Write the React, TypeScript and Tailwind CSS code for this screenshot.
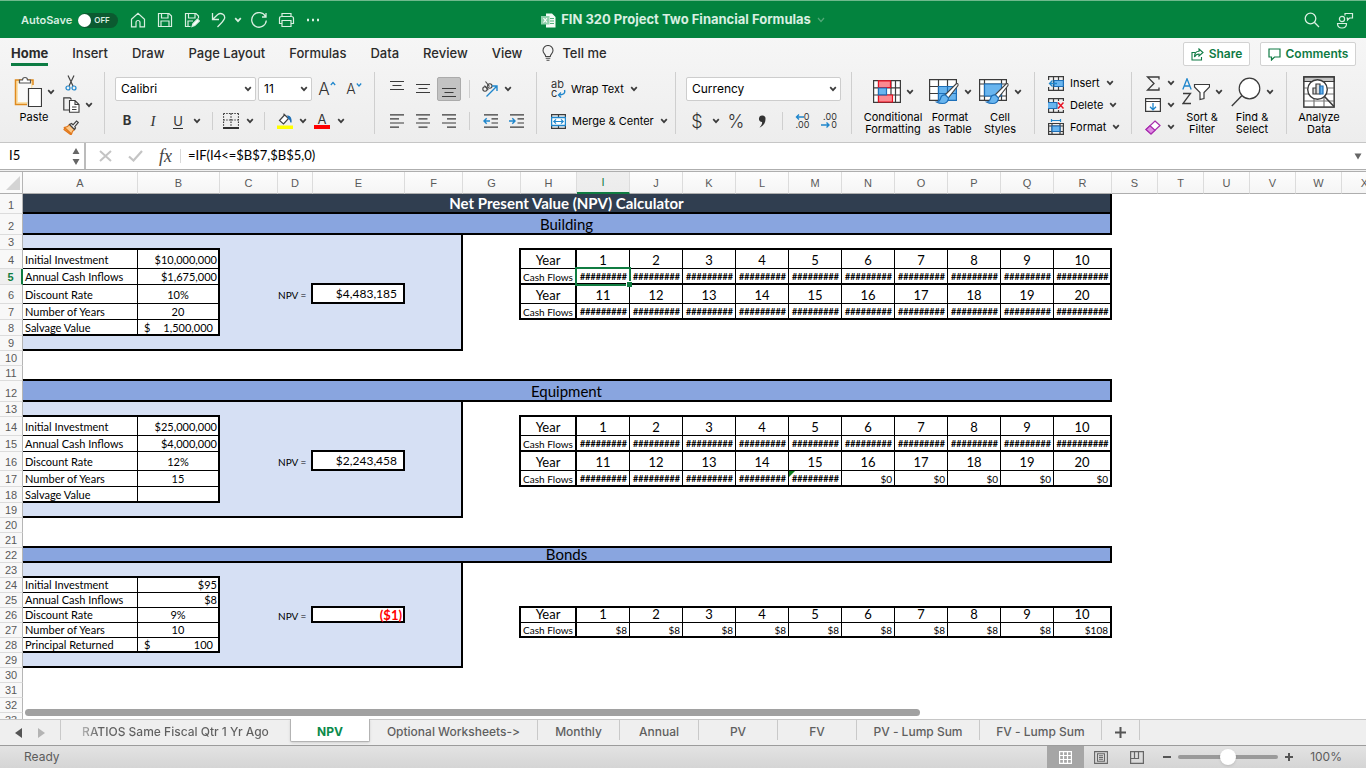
import { useState } from "react";
import type { ReactNode } from "react";

/* ---------- small helpers ---------- */

function Icon({ w, h, children }: { w: number; h: number; children: ReactNode }) {
  return (
    <svg width={w} height={h} viewBox={`0 0 ${w} ${h}`} fill="none" stroke="#3b3b3b" strokeWidth="1.2" className="shrink-0" aria-hidden="true">
      {children}
    </svg>
  );
}

function Chevron() {
  return (
    <svg width="8" height="6" viewBox="0 0 8 6" fill="none" stroke="#3b3b3b" strokeWidth="1.7" className="shrink-0" aria-hidden="true">
      <path d="M1.2 1.2L4 4.2L6.8 1.2" />
    </svg>
  );
}

function Tool({ label, width, children, active }: { label: string; width: string; children: ReactNode; active?: boolean }) {
  return (
    <button
      aria-label={label}
      className={`flex h-6 shrink-0 items-center justify-center ${width} ${active ? "rounded-xs border border-[#ababab] bg-[#c3c3c3]" : ""}`}
    >
      {children}
    </button>
  );
}

function Split({ width }: { width: string }) {
  return (
    <span className={`flex h-[18px] shrink-0 justify-center ${width}`}>
      <span className="w-px bg-[#cfcfcf]" />
    </span>
  );
}

function Group({ className, children }: { className: string; children: ReactNode }) {
  return <div className={`flex h-[62px] shrink-0 border-r border-[#cfcfcf] ${className}`}>{children}</div>;
}

function Picker({ label, width, options }: { label: string; width: string; options: string[] }) {
  return (
    <span className={`flex h-6 items-center rounded-xs border border-[#cdcdcd] bg-white pr-[3px] ${width}`}>
      <select aria-label={label} className="h-full min-w-0 flex-1 appearance-none bg-transparent pl-[5px] text-[12px] text-black outline-none">
        {options.map((o) => (
          <option key={o}>{o}</option>
        ))}
      </select>
      <Chevron />
    </span>
  );
}

function BigTool({ width, lines, children }: { width: string; lines: string[]; children: ReactNode }) {
  return (
    <button className={`flex h-[64px] shrink-0 flex-col items-center text-[11px] leading-[12px] whitespace-nowrap text-black ${width}`}>
      <span className="flex h-[39px] shrink-0 items-center gap-[5px]">{children}</span>
      {lines.map((l) => (
        <span key={l}>{l}</span>
      ))}
    </button>
  );
}

/* ---------- title bar ---------- */

function TitleBar() {
  return (
    <header className="grid h-[38px] shrink-0 grid-cols-[1fr_auto_1fr] items-center border-t border-[#6fb98c] bg-[#03833e] pt-px text-[#d9efe1]">
      <div className="flex items-center pl-[21px]">
        <span id="autosave" className="text-[11px] font-semibold">AutoSave</span>
        <button role="switch" aria-checked="false" aria-labelledby="autosave" className="ml-1.5 flex h-[15px] w-10 items-center rounded-full bg-[#0b5a30] text-[8px] font-semibold">
          <span className="h-[13px] w-[13px] rounded-full bg-white" />
          <span className="ml-[3px]">OFF</span>
        </button>
        <div className="ml-[6px] flex items-center [&_svg]:stroke-[#d9efe1]">
          <Tool label="Home" width="w-[27px]">
            <Icon w={16} h={16}><path d="M1.5 7.2L8 1.2L14.500 7.200V14.800H10V10.500A2 2 0 0 0 6 10.500V14.800H1.500Z" /></Icon>
          </Tool>
          <Tool label="Save" width="w-[27px]">
            <Icon w={16} h={16}><path d="M1.500 1.500H12L14.500 4V14.500H1.500ZM4.500 1.500V6H11V1.500M4 14.500V9H12V14.500" /></Icon>
          </Tool>
          <Tool label="Save as" width="w-[27px]">
            <Icon w={16} h={16}>
              <path d="M6.500 14.500H1.500V1.500H12L14.500 4V6.500M4.500 1.500V6H11V1.500M4 14.500V9H9" />
              <path d="M8 14.600L9 11.500L13.500 7L15.400 8.900L10.800 13.500Z" fill="#fff" />
            </Icon>
          </Tool>
          <Tool label="Undo" width="w-[27px]">
            <Icon w={16} h={16}><path d="M1.500 1V7.500H8M1.500 7.500L6.500 2.700C10 0 14.500 2.500 13.500 6.500C12.800 8.500 10 11.500 6.500 15" strokeWidth="1.300" /></Icon>
          </Tool>
          <Tool label="Undo history" width="w-3"><Chevron /></Tool>
          <Tool label="Redo" width="w-[30px]">
            <Icon w={18} h={17}><path d="M15.500 4.500A7.300 7.300 0 1 0 16.300 8.500M16 1V5H12" strokeWidth="1.300" /></Icon>
          </Tool>
          <Tool label="Print" width="w-6">
            <Icon w={17} h={16}><path d="M4 4.500V1.500H13V4.500M4 11.500H1.500V6.500Q1.500 4.500 3.500 4.500H13.500Q15.500 4.500 15.500 6.500V11.500H13M4 8.500H13V14.500H4Z" /></Icon>
          </Tool>
          <Tool label="More" width="w-[30px]">
            <Icon w={14} h={4}><path d="M1 2h2M6 2h2M11 2h2" strokeWidth="2.400" /></Icon>
          </Tool>
        </div>
      </div>
      <button className="flex items-center text-[13px] font-bold">
        <Icon w={16} h={15}>
          <path d="M5 .5H11L14.500 4V14.500H5Z" fill="#f4fbf6" stroke="none" />
          <path d="M9 5.500H13M9 8H13M9 10.500H13" stroke="#4fae79" />
          <path d="M0 3H8.500V11.500H0Z" fill="#8fd0ab" stroke="none" />
          <path d="M2.500 5L6 9.500M6 5L2.500 9.500" stroke="#fff" />
        </Icon>
        <span className="mr-1.5 ml-1">FIN 320 Project Two Financial Formulas</span>
        <svg width="8" height="6" viewBox="0 0 8 6" fill="none" stroke="#53a878" strokeWidth="1.2" aria-hidden="true"><path d="M1 1L4 4.500L7 1" /></svg>
      </button>
      <div className="flex items-center justify-end gap-4 pr-3">
        <button aria-label="Search">
          <Icon w={16} h={16}><g stroke="#d9efe1" strokeWidth="1.300"><circle cx="6.500" cy="6.500" r="5.300" /><path d="M10.300 10.300L15 15" /></g></Icon>
        </button>
        <button aria-label="Presence">
          <Icon w={18} h={17}>
            <g stroke="#d9efe1" strokeWidth="1.200">
              <circle cx="6" cy="7" r="2.600" />
              <path d="M1.500 11.500H10.500Q10.500 16 6 16T1.500 11.500ZM9 3.500V1.500H16.500V6H13.500L11.500 8V6H10.500" />
            </g>
          </Icon>
        </button>
      </div>
    </header>
  );
}

/* ---------- ribbon ---------- */

const MENUS = ["Home", "Insert", "Draw", "Page Layout", "Formulas", "Data", "Review", "View"];

function MenuTabs() {
  return (
    <div className="flex h-[34px] items-start justify-between pr-[10px] pl-[11px]">
      <nav className="flex gap-6 text-[13px] leading-[18px] font-medium text-[#2b2b2b]">
        {MENUS.map((m) => (
          <button key={m} className={m === "Home" ? "h-7 border-b-3 border-[#0d7c43] pt-1 font-bold" : "h-7 pt-0.5"}>
            {m}
          </button>
        ))}
        <button className="-ml-1 flex h-7 items-center gap-2 pt-0.5">
          <Icon w={12} h={16}>
            <path d="M3.700 11.500C3.700 9 1 8.500 1 5.500A5 5 0 0 1 11 5.500C11 8.500 8.300 9 8.300 11.500ZM3.700 13.300H8.300M4.500 15.300H7.500" stroke="#444" strokeWidth="1.100" />
          </Icon>
          Tell me
        </button>
      </nav>
      <div className="flex gap-2.5 pt-1 text-[12px] font-semibold text-[#0f7b44]">
        <button className="flex h-6 w-[67px] items-center justify-center gap-[5px] rounded-xs border border-[#d2d2d2] bg-white">
          <Icon w={13} h={13}><path d="M4 4.500H1V12H10.500V9M8 1L12 4.500L8 8V6C5.500 6 4.500 7 3.500 9C3.500 5.500 5 3.200 8 3.200Z" stroke="#0f7b44" strokeWidth="1.100" /></Icon>
          Share
        </button>
        <button className="flex h-6 w-24 items-center justify-center gap-[5px] rounded-xs border border-[#d2d2d2] bg-white">
          <Icon w={13} h={13}><path d="M1 1H12V9H6.500L3.500 12V9H1Z" stroke="#0f7b44" /></Icon>
          Comments
        </button>
      </div>
    </div>
  );
}

function Brush() {
  return (
    <g>
      <path d="M13.500 20.500L27 7Q29.500 5.500 29 8.500L18 22.500Z" fill="#fff" stroke="#444" strokeWidth="1.100" />
      <path d="M16.500 18L19.500 21Q19 26.500 13.500 26.500Q10 26.500 7.500 25Q11 24.500 11.500 21.500Q12.500 17.500 16.500 18Z" fill="#69b5ef" stroke="#1d6fb8" />
    </g>
  );
}

function Ribbon() {
  return (
    <div className="flex h-[70px] overflow-hidden text-[11px] text-black">
      <Group className="w-[105px] pl-[14px]">
        <BigTool width="w-10" lines={["Paste"]}>
          <Icon w={28} h={32}>
            <path d="M19 9V4H1.500V28.500H13" fill="#fbe2ae" stroke="#e08a1e" strokeWidth="1.500" />
            <path d="M4 7H17V26H4Z" fill="#fafafa" stroke="none" />
            <path d="M5.500 7V4H8.500Q8.500 1.500 11 1.500T13.500 4H16.500V7Z" fill="#fff" stroke="#555" />
            <path d="M14.500 12.500H27.500V30.500H14.500Z" fill="#fff" />
          </Icon>
          <Chevron />
        </BigTool>
        <div className="ml-[9px] flex flex-col gap-0.5 pt-px">
          <button aria-label="Cut" className="flex h-5 w-4 shrink-0 items-center justify-center">
            <Icon w={12} h={16}>
              <path d="M3 .5L8 11M9 .5L4 11" stroke="#444" />
              <circle cx="3" cy="13" r="2" stroke="#1f86cc" /><circle cx="9" cy="13" r="2" stroke="#1f86cc" />
            </Icon>
          </button>
          <button aria-label="Copy" className="flex h-5 shrink-0 items-center gap-[5px]">
            <Icon w={17} h={16}>
              <path d="M7.500 13H.8V.8H7L8.500 2.500" />
              <path d="M6.500 3.500H12L16 7.500V15.300H6.500ZM12 3.500V7.500H16M9 10H13.500M9 12.500H13.500" fill="#fff" strokeWidth="1.100" />
            </Icon>
            <Chevron />
          </button>
          <button aria-label="Format painter" className="flex h-5 w-4 shrink-0 items-center justify-center">
            <Icon w={16} h={15}>
              <path d="M2 7.500L8.500 13.500L7.500 14.500L1 9.500Z" fill="#f59a38" stroke="#e0771c" />
              <path d="M1.500 7.500Q5 7 6.500 4.500L11.500 9.500Q9 11 8.500 14Z" fill="#fbc98b" stroke="#e0771c" />
              <path d="M6.500 4.500L8.500 3.500L10 4.800L13.500 1L15.300 2.500L11.800 6.500L12.500 8L11.500 9.500Z" fill="#fff" stroke="#444" />
            </Icon>
          </button>
        </div>
      </Group>

      <Group className="w-[270px] flex-col pt-[5px] pl-[10px]">
        <div className="flex gap-0.5">
          <Picker label="Font" width="w-[141px]" options={["Calibri", "Arial"]} />
          <Picker label="Font size" width="w-[54px]" options={["11", "12", "14"]} />
          <div className="-ml-0.5 flex">
            <Tool label="Grow font" width="w-[30px]">
              <span className="flex text-[17px] leading-none font-light text-[#333]">A<Icon w={6} h={6}><path d="M.8 4L3 1.500L5.200 4" stroke="#1f86cc" /></Icon></span>
            </Tool>
            <Tool label="Shrink font" width="w-6">
              <span className="flex text-[14px] leading-none font-light text-[#333]">A<Icon w={6} h={6}><path d="M.8 1.500L3 4L5.200 1.500" stroke="#1f86cc" /></Icon></span>
            </Tool>
          </div>
        </div>
        <div className="mt-2 flex items-center text-[13px] text-[#333]">
          <Tool label="Bold" width="w-6"><b>B</b></Tool>
          <Tool label="Italic" width="w-7"><i className="font-['Liberation_Serif'] text-[15px]">I</i></Tool>
          <Tool label="Underline" width="w-[22px]"><span className="border-b border-[#333] leading-[14px]">U</span></Tool>
          <Tool label="Underline styles" width="w-4"><Chevron /></Tool>
          <Split width="w-[14px]" />
          <Tool label="Borders" width="w-6">
            <Icon w={16} h={16}>
              <path d="M.5 .5V13M15.500 .5V13M8 .5V13M.5 .5H15.500M.5 7H15.500" strokeDasharray="1.500 1.200" />
              <path d="M0 15H16" stroke="#000" strokeWidth="1.600" />
            </Icon>
          </Tool>
          <Tool label="Border styles" width="w-[14px]"><Chevron /></Tool>
          <Split width="w-[14px]" />
          <Tool label="Fill color" width="w-7">
            <Icon w={16} h={16}>
              <path d="M7.500 2L2.500 7.500L6.500 11L11.500 5.500L6.500 .8M11.500 5.500L9 3" fill="#fff" stroke="#444" />
              <path d="M11 3Q14.500 4 14 9.500Q13.500 6 11.500 5.500Z" fill="#1f6fb5" stroke="#1f6fb5" />
              <path d="M0 12.500H16V16H0Z" fill="#ff0" stroke="none" />
            </Icon>
          </Tool>
          <Tool label="Fill colors" width="w-2"><Chevron /></Tool>
          <Tool label="Font color" width="w-[30px]">
            <span className="flex w-4 flex-col items-center border-b-4 border-[#f00] text-[13px] leading-[12px]">A</span>
          </Tool>
          <Tool label="Font colors" width="w-2"><Chevron /></Tool>
        </div>
      </Group>

      <Group className="w-[162px] flex-col pt-[5px] pl-[9px]">
        <div className="flex items-center">
          <Tool label="Align top" width="w-[26px]"><Icon w={14} h={16}><path d="M0 .5H14M2.500 4.500H11.500M0 8.500H14" /></Icon></Tool>
          <Tool label="Align middle" width="w-[26px]"><Icon w={14} h={16}><path d="M0 3.500H14M2.500 7.500H11.500M0 11.500H14" /></Icon></Tool>
          <span className="px-px"><Tool label="Align bottom" width="w-6" active><Icon w={14} h={16}><path d="M0 7.500H14M2.500 11.500H11.500M0 15.500H14" /></Icon></Tool></span>
          <Split width="w-[14px]" />
          <Tool label="Orientation" width="w-7">
            <Icon w={18} h={17}>
              <g stroke="#444" strokeWidth="1.100">
                <circle cx="4" cy="8" r="2.200" /><path d="M3.500 4.700L7.300 9" /><circle cx="8.800" cy="5" r="2.200" /><path d="M4.500 .5L8.500 5.500" />
              </g>
              <path d="M5.500 15.500L15.500 5.500M11 5H16V10" stroke="#1f86cc" strokeWidth="1.400" />
            </Icon>
          </Tool>
          <Tool label="Orientation options" width="w-2"><Chevron /></Tool>
        </div>
        <div className="mt-2 flex items-center">
          <Tool label="Align left" width="w-[26px]"><Icon w={14} h={14}><path d="M0 .8H14M0 4.900H9M0 9H14M0 13.200H9" /></Icon></Tool>
          <Tool label="Align center" width="w-[26px]"><Icon w={14} h={14}><path d="M0 .8H14M2.500 4.900H11.500M0 9H14M2.500 13.200H11.500" /></Icon></Tool>
          <Tool label="Align right" width="w-[26px]"><Icon w={14} h={14}><path d="M0 .8H14M5 4.900H14M0 9H14M5 13.200H14" /></Icon></Tool>
          <Split width="w-[14px]" />
          <Tool label="Decrease indent" width="w-7"><Icon w={15} h={14}><path d="M1 .8H15M8.500 4.900H15M8.500 9H15M1 13.200H15" /><path d="M7 7H1.200M3.700 4.300L1 7L3.700 9.700" stroke="#1f86cc" strokeWidth="1.400" /></Icon></Tool>
          <Tool label="Increase indent" width="w-6"><Icon w={15} h={14}><path d="M1 .8H15M8.500 4.900H15M8.500 9H15M1 13.200H15" /><path d="M0 7H5.800M3.300 4.300L6 7L3.300 9.700" stroke="#1f86cc" strokeWidth="1.400" /></Icon></Tool>
        </div>
      </Group>

      <Group className="w-[139px] flex-col pt-[5px] pl-[14px]">
        <button className="flex h-6 items-center gap-1.5 whitespace-nowrap">
          <span className="flex w-[14px] flex-col text-left text-[11px] leading-[9px] text-[#333]">
            <span>ab</span>
            <span className="flex">c<Icon w={9} h={9}><path d="M7.500 1Q9 6 1.500 6M4 3.500L1.500 6L4 8.500" stroke="#1f86cc" strokeWidth="1.400" /></Icon></span>
          </span>
          Wrap Text <Chevron />
        </button>
        <button className="mt-2 flex h-6 items-center gap-1.5 whitespace-nowrap">
          <Icon w={15} h={15}>
            <path d="M.6 .6H14.400V14.400H.6ZM7.500 .6V3.500M7.500 11.500V14.400" />
            <path d="M.6 3.500H14.400V11.500H.6Z" fill="#fff" stroke="#1f86cc" strokeWidth="1.300" />
            <path d="M2.800 7.500H12.200M5 5.300L2.800 7.500L5 9.700M10 5.300L12.200 7.500L10 9.700" stroke="#1f86cc" strokeWidth="1.200" />
          </Icon>
          Merge &amp; Center <Chevron />
        </button>
      </Group>

      <Group className="w-44 flex-col pt-[5px] pl-[10px]">
        <Picker label="Number format" width="w-[155px]" options={["Currency", "General", "Percentage"]} />
        <div className="mt-2 flex items-center text-[#333]">
          <Tool label="Currency" width="w-[22px]"><span className="text-[18px] font-light">$</span></Tool>
          <Tool label="Currency options" width="w-4"><Chevron /></Tool>
          <Tool label="Percent" width="w-6"><span className="text-[18px] font-light">%</span></Tool>
          <Tool label="Comma style" width="w-7"><Icon w={8} h={13}><path d="M1 3.500A3 3 0 0 1 7.500 4C7.500 8 5 11.500 1.500 12.500C3.500 10.500 4.500 8.500 4 7A3 3 0 0 1 1 3.500Z" fill="#333" stroke="none" /></Icon></Tool>
          <Split width="w-3" />
          <Tool label="Increase decimal" width="w-7">
            <span className="flex flex-col items-end text-[9px] leading-[8px]">
              <span className="flex"><Icon w={9} h={8}><path d="M9 4H1.500M4 1.500L1.500 4L4 6.500" stroke="#1f86cc" strokeWidth="1.400" /></Icon>0</span>
              <span>.00</span>
            </span>
          </Tool>
          <Tool label="Decrease decimal" width="w-[26px]">
            <span className="flex flex-col items-end text-[9px] leading-[8px]">
              <span>.00</span>
              <span className="flex"><Icon w={10} h={8}><path d="M0 4H8M5.500 1.500L8 4L5.500 6.500" stroke="#1f86cc" strokeWidth="1.400" /></Icon>0</span>
            </span>
          </Tool>
        </div>
      </Group>

      <Group className="w-[183px] pl-[12px]">
        <BigTool width="w-[58px]" lines={["Conditional", "Formatting"]}>
          <Icon w={28} h={23}>
            <path d="M.6 .6H27.400V22.400H.6ZM.6 7.800H27.400M.6 15H27.400M5.500 .6V22.400M18 .6V22.400M22.500 .6V22.400" fill="#fff" />
            <path d="M5.500 .8H17.500V7.500H5.500ZM5.500 15H19.500V22H5.500Z" fill="#fb8a91" stroke="#e81123" />
            <path d="M5.500 8H13.500V14.800H5.500Z" fill="#69b5ef" stroke="#1d6fb8" />
          </Icon>
          <Chevron />
        </BigTool>
        <div className="w-[3px]" />
        <BigTool width="w-[50px]" lines={["Format", "as Table"]}>
          <Icon w={30} h={29}>
            <path d="M.6 2.600H27.400V23.400H.6ZM.6 9.500H27.400M.6 16.500H27.400M9.500 2.600V23.400M18.500 2.600V23.400" fill="#fff" />
            <path d="M9.500 9.500H27.400V23.400H9.500ZM18.500 9.500V23.400M9.500 16.500H27.400" fill="#69b5ef" stroke="#1d6fb8" />
            <Brush />
          </Icon>
          <Chevron />
        </BigTool>
        <BigTool width="w-[50px]" lines={["Cell", "Styles"]}>
          <Icon w={30} h={29}>
            <path d="M.6 2.600H27.400V23.400H.6ZM.6 7H27.400M.6 19H27.400M5.500 2.600V23.400M22.500 2.600V23.400" fill="#fff" />
            <path d="M5.500 7H22.500V19H5.500Z" fill="#69b5ef" stroke="#1d6fb8" />
            <Brush />
          </Icon>
          <Chevron />
        </BigTool>
      </Group>

      <Group className="w-[97px] flex-col gap-0.5 pt-px pl-[13px]">
        <button className="flex h-5 shrink-0 items-center gap-1.5">
          <Icon w={16} h={15}><path d="M.6 4V.6H15.400V14.400H.6V11M5.500 .6V14.400M10.500 .6V14.400" /><path d="M6 4.500H15.400V10.500H6Z" fill="#69b5ef" stroke="#1d6fb8" /><path d="M9 7.500H1.500M4.500 4.500L1.500 7.500L4.500 10.500" stroke="#1f86cc" strokeWidth="1.300" /></Icon>
          Insert <Chevron />
        </button>
        <button className="flex h-5 shrink-0 items-center gap-1.5">
          <Icon w={16} h={15}><path d="M.6 4V.6H15.400V3M.6 11V14.400H15.400V12M5.500 .6V14.400M10.500 .6V3M10.500 12V14.400" /><path d="M0 4.500H9V10.500H0" fill="#69b5ef" stroke="#1d6fb8" /><path d="M10 4.500L15.500 10.500M15.500 4.500L10 10.500" stroke="#e81123" strokeWidth="1.500" /></Icon>
          Delete <Chevron />
        </button>
        <button className="flex h-5 shrink-0 items-center gap-1.5">
          <Icon w={16} h={16}><path d="M.6 4.500H15.400V15.400H.6ZM4 4.500V15.400M12 4.500V15.400M.6 7H15.400M.6 12.500H15.400" /><path d="M4 7H12V12.500H4Z" fill="#69b5ef" stroke="#1d6fb8" /><path d="M3.500 1.500H12.500M3.500 0V3M12.500 0V3" stroke="#1f86cc" /></Icon>
          Format <Chevron />
        </button>
      </Group>

      <Group className="w-[155px] pl-[13px]">
        <div className="flex w-[30px] flex-col gap-0.5 pt-px">
          <button aria-label="AutoSum" className="flex h-5 shrink-0 items-center justify-between">
            <Icon w={16} h={15}><path d="M14 3.500V1H2.500L9 7.500L2.500 14H14V11.500" strokeWidth="1.300" /></Icon><Chevron />
          </button>
          <button aria-label="Fill" className="flex h-5 shrink-0 items-center justify-between">
            <Icon w={16} h={14}><path d="M.6 .6H15.400V13.400H.6ZM.6 3.500H15.400" fill="#fff" /><path d="M8 5V11.500M5 8.800L8 11.800L11 8.800" stroke="#1f86cc" strokeWidth="1.300" /></Icon><Chevron />
          </button>
          <button aria-label="Clear" className="flex h-5 shrink-0 items-center justify-between">
            <Icon w={16} h={15}><path d="M10 1L15 5.500L6 14L1 9.500Z" fill="#fff" stroke="#a72cae" /><path d="M5 5.800L10 10.300L6 14L1 9.500Z" fill="#e08be4" stroke="#a72cae" /></Icon><Chevron />
          </button>
        </div>
        <BigTool width="w-[54px]" lines={["Sort &", "Filter"]}>
          <Icon w={28} h={27}>
            <path d="M.8 11.500L5 .8L9.200 11.500M2.300 8H7.700" stroke="#1f86cc" strokeWidth="1.300" />
            <path d="M1 15.500H8.500L1 25.500H9" strokeWidth="1.300" />
            <path d="M12.500 6.500H27.500V9L22 14.500V20.500L18 21.500V14.500L12.500 9Z" fill="#fff" />
          </Icon>
          <Chevron />
        </BigTool>
        <BigTool width="w-[46px]" lines={["Find &", "Select"]}>
          <Icon w={30} h={30}><circle cx="18.500" cy="11.500" r="10.300" fill="#fff" /><path d="M11 18.500L.8 29" strokeWidth="1.400" /></Icon>
          <Chevron />
        </BigTool>
      </Group>

      <div className="flex shrink-0 pl-[9px]">
        <BigTool width="w-[46px]" lines={["Analyze", "Data"]}>
          <Icon w={32} h={32}>
            <path d="M.8 .8H31.200V31.200H.8ZM.8 12H31.200M.8 18H31.200M.8 25H31.200M11 6V31M21 6V31" fill="#fff" stroke="#777" />
            <path d="M.8 .8H31.200V5.500H.8Z" fill="#c4c4c4" />
            <path d="M.8 .8H31.200V31.200H.8Z" />
            <circle cx="14.500" cy="13.500" r="9.800" fill="#fff" strokeWidth="1.400" />
            <path d="M21.500 20.500L31 30.500" strokeWidth="1.600" />
            <path d="M10 12H13V18H10ZM13 8H17V18H13Z" fill="#ddd" />
            <path d="M17 10H20V18H17Z" fill="#69b5ef" stroke="#1d6fb8" />
          </Icon>
        </BigTool>
      </div>
    </div>
  );
}

/* ---------- formula bar ---------- */

function FormulaBar() {
  return (
    <div className="flex h-[27px] shrink-0 items-stretch border-b border-[#aeaeae] bg-white">
      <div className="flex w-[86px] items-center justify-between border-r-2 border-[#bcbcbc] pr-1 pl-[9px]">
        <input aria-label="Name box" defaultValue="I5" className="w-14 font-[Lato] text-[13px] text-black outline-none" />
        <Icon w={8} h={20}><path d="M4 2L7.500 8H.5ZM4 19L7.500 13H.5Z" fill="#666" stroke="none" /></Icon>
      </div>
      <button aria-label="Cancel" className="flex w-[38px] items-center justify-center">
        <Icon w={13} h={12}><path d="M1 1L12 11M12 1L1 11" stroke="#c4c4c4" strokeWidth="2" /></Icon>
      </button>
      <button aria-label="Enter" className="flex w-[22px] items-center justify-center">
        <Icon w={15} h={12}><path d="M1 6.500L5.500 10.500L14 1" stroke="#c4c4c4" strokeWidth="2.200" /></Icon>
      </button>
      <button aria-label="Insert function" className="flex w-[34px] items-center justify-end pr-2 font-['Liberation_Serif'] text-[18px] text-[#444] italic">fx</button>
      <span className="my-1.5 mr-[7px] w-px shrink-0 bg-[#d9d9d9]" />
      <input aria-label="Formula" defaultValue="=IF(I4<=$B$7,$B$5,0)" className="min-w-0 flex-1 font-[Lato] text-[13px] text-black outline-none" />
      <button aria-label="Expand formula bar" className="pr-1 pl-2"><Icon w={8} h={7}><path d="M.5 .5H7.500L4 6.500Z" fill="#666" stroke="none" /></Icon></button>
    </div>
  );
}

/* ---------- worksheet ---------- */

const COLS: [string, string][] = [
  ["A", "w-[115px]"], ["B", "w-[82px]"], ["C", "w-[58px]"], ["D", "w-[35px]"], ["E", "w-[92px]"], ["F", "w-[58px]"],
  ["G", "w-[58px]"], ["H", "w-[56px]"], ["I", "w-[53px]"], ["J", "w-[53px]"], ["K", "w-[53px]"], ["L", "w-[53px]"],
  ["M", "w-[53px]"], ["N", "w-[53px]"], ["O", "w-[53px]"], ["P", "w-[53px]"], ["Q", "w-[53px]"], ["R", "w-[58px]"],
  ["S", "w-[46px]"], ["T", "w-[46px]"], ["U", "w-[46px]"], ["V", "w-[46px]"], ["W", "w-[46px]"], ["X", "w-[46px]"],
];

type Line = "none" | "thin" | "thick";
const BOTTOM: Record<Line, string> = { none: "", thin: "border-b", thick: "border-b-2" };

interface RowSpec {
  h: string;
  title?: string;
  band?: string;
  pane?: boolean;
  paneEnd?: boolean;
  label?: string;
  value?: string;
  kind?: "right" | "center" | "accounting";
  inputLine?: Line;
  npv?: string;
  loss?: boolean;
  head?: string;
  cells?: string[];
  flowLine?: Line;
  topOfFlow?: boolean;
  ruleBelow?: boolean;
}

const hashes = (n: number) => Array.from({ length: n }, (_, i) => (i === 9 ? "##########" : "#########"));
const range = (a: number) => Array.from({ length: 10 }, (_, i) => String(a + i));

const H15 = "h-[15px]";
const H16 = "h-4";
const H19 = "h-[19px]";

const ROWS: RowSpec[] = [
  { h: "h-5", title: "Net Present Value (NPV) Calculator" },
  { h: "h-[21px]", band: "Building" },
  { h: H15, pane: true, inputLine: "thick", flowLine: "thick" },
  { h: H19, pane: true, label: "Initial Investment", value: "$10,000,000", kind: "right", inputLine: "thin", head: "Year", cells: range(1), flowLine: "thin", topOfFlow: true },
  { h: H16, pane: true, label: "Annual Cash Inflows", value: "$1,675,000", kind: "right", inputLine: "thin", head: "Cash Flows", cells: hashes(10), flowLine: "thick" },
  { h: H19, pane: true, label: "Discount Rate", value: "10%", kind: "center", inputLine: "thin", npv: "$4,483,185", head: "Year", cells: range(11), flowLine: "thin" },
  { h: H16, pane: true, label: "Number of Years", value: "20", kind: "center", inputLine: "thin", head: "Cash Flows", cells: hashes(10), flowLine: "thick" },
  { h: H16, pane: true, label: "Salvage Value", value: "1,500,000", kind: "accounting", inputLine: "thick" },
  { h: H15, pane: true, paneEnd: true },
  { h: H15 },
  { h: H15, ruleBelow: true },
  { h: "h-[21px]", band: "Equipment" },
  { h: H15, pane: true, inputLine: "thick", flowLine: "thick" },
  { h: H19, pane: true, label: "Initial Investment", value: "$25,000,000", kind: "right", inputLine: "thin", head: "Year", cells: range(1), flowLine: "thin", topOfFlow: true },
  { h: H16, pane: true, label: "Annual Cash Inflows", value: "$4,000,000", kind: "right", inputLine: "thin", head: "Cash Flows", cells: hashes(10), flowLine: "thick" },
  { h: H19, pane: true, label: "Discount Rate", value: "12%", kind: "center", inputLine: "thin", npv: "$2,243,458", head: "Year", cells: range(11), flowLine: "thin" },
  { h: H16, pane: true, label: "Number of Years", value: "15", kind: "center", inputLine: "thin", head: "Cash Flows", cells: [...hashes(5), "$0", "$0", "$0", "$0", "$0"], flowLine: "thick" },
  { h: H16, pane: true, label: "Salvage Value", value: "", kind: "center", inputLine: "thick" },
  { h: H15, pane: true, paneEnd: true },
  { h: H15 },
  { h: H15, ruleBelow: true },
  { h: H15, band: "Bonds" },
  { h: H15, pane: true, inputLine: "thick" },
  { h: H15, pane: true, label: "Initial Investment", value: "$95", kind: "right", inputLine: "thin" },
  { h: H15, pane: true, label: "Annual Cash Inflows", value: "$8", kind: "right", inputLine: "thin", flowLine: "thick" },
  { h: H15, pane: true, label: "Discount Rate", value: "9%", kind: "center", inputLine: "thin", npv: "($1)", loss: true, head: "Year", cells: range(1), flowLine: "thin", topOfFlow: true },
  { h: H15, pane: true, label: "Number of Years", value: "10", kind: "center", inputLine: "thin", head: "Cash Flows", cells: ["$8", "$8", "$8", "$8", "$8", "$8", "$8", "$8", "$8", "$108"], flowLine: "thick" },
  { h: H15, pane: true, label: "Principal Returned", value: "100", kind: "accounting", inputLine: "thick" },
  { h: H15, pane: true, paneEnd: true },
  { h: H15 },
  { h: H15 },
  { h: H15 },
  { h: H15 },
];

function InputCells({ row }: { row: RowSpec }) {
  const line = BOTTOM[row.inputLine ?? "none"];
  const filled = row.label !== undefined;
  const lead = row.inputLine === "thick" ? "leading-[12px]" : row.h === H19 ? "pb-px leading-[14px]" : "leading-[14px]";
  const base = `border-black align-bottom ${line} ${lead} ${filled ? "bg-white" : "bg-[#d6e0f4]"}`;
  return (
    <>
      <td className={`${base} pl-0.5 ${filled ? "border-r" : ""}`}>{row.label}</td>
      <td
        className={`${base} ${filled ? "border-r-2" : ""} ${
          row.kind === "right" ? "pr-px text-right" : row.kind === "center" ? "text-center" : "pr-[5px] pl-1.5"
        }`}
      >
        {row.kind === "accounting" ? (
          <span className="flex justify-between"><span>$</span><span>{row.value}</span></span>
        ) : (
          row.value
        )}
      </td>
    </>
  );
}

function FlowCells({ row, n }: { row: RowSpec; n: number }) {
  const line = BOTTOM[row.flowLine ?? "none"];
  const year = row.head === "Year";
  const lead = !year ? "align-bottom leading-[12px]" : row.h === H19 ? "align-bottom pb-px leading-[14px]" : "align-top leading-[12px]";
  return (
    <>
      <td
        className={`border-r-2 border-black text-center whitespace-nowrap ${line} ${lead} ${year ? "text-[13px]" : "text-[10px]"} ${
          row.topOfFlow ? "shadow-[-2px_-2px_0_0_#000]" : ""
        }`}
      >
        {row.head}
      </td>
      {row.cells?.map((text, i) => {
        const hash = text.startsWith("#");
        const selected = n === 5 && i === 0;
        const flagged = n === 17 && i === 4;
        return (
          <td
            key={i}
            className={`border-black ${line} ${lead} ${i === 9 ? "border-r-2" : "border-r"} ${
              year ? "text-center text-[13px]" : hash ? "pl-px text-center text-[9px] font-bold" : "pr-0.5 text-right text-[10px]"
            } ${selected || flagged ? "relative" : ""}`}
          >
            {text}
            {selected && (
              <>
                <span className="absolute -top-0.5 -right-0.5 -bottom-[3px] -left-0.5 z-10 border-2 border-[#107c41]" />
                <span className="absolute -right-[3px] -bottom-1 z-20 h-1.5 w-1.5 border-t border-l border-white bg-[#107c41]" />
              </>
            )}
            {flagged && (
              <svg width="6" height="6" viewBox="0 0 6 6" className="absolute top-0 left-0" aria-hidden="true"><path d="M0 0H6L0 6Z" fill="#0c7d1c" /></svg>
            )}
          </td>
        );
      })}
    </>
  );
}

function SheetRow({ row, n }: { row: RowSpec; n: number }) {
  let body: ReactNode;
  if (row.title || row.band) {
    body = (
      <>
        <td
          colSpan={18}
          className={`border-r-2 border-b-2 border-black text-center text-[15px] ${
            row.title ? "bg-[#303e50] font-bold text-white" : "bg-[#89a5df]"
          } ${row.band && row.h === H15 ? "align-top leading-[12px]" : "align-bottom leading-[18px]"}`}
        >
          {row.title ?? row.band}
        </td>
        <td colSpan={6} />
      </>
    );
  } else if (row.pane) {
    const end = row.paneEnd ? "border-b-2 border-black" : "";
    body = (
      <>
        {row.paneEnd ? (
          <td colSpan={5} className={`bg-[#d6e0f4] ${end}`} />
        ) : (
          <>
            <InputCells row={row} />
            <td className="bg-[#d6e0f4]" />
            <td
              className={`bg-[#d6e0f4] pr-[5px] text-right align-bottom text-[10px] whitespace-nowrap ${
                row.npv ? "border-r-2 border-black" : ""
              } ${row.h === H19 ? "pb-0.5" : ""}`}
            >
              {row.npv && "NPV ="}
            </td>
            {row.npv ? (
              <td
                className={`border-r-2 border-b-2 border-black bg-white text-right align-bottom leading-[12px] shadow-[-2px_-2px_0_0_#000,0_-2px_0_0_#000] ${
                  row.loss ? "pr-px text-[13px] font-bold text-[#f00]" : "pr-1.5 pb-[2px] text-[12px]"
                }`}
              >
                {row.npv}
              </td>
            ) : (
              <td className="bg-[#d6e0f4]" />
            )}
          </>
        )}
        <td className={`border-r-2 border-black bg-[#d6e0f4] ${end}`} />
        <td className={row.head ? "border-r-2 border-black" : ""} />
        {row.head ? <FlowCells row={row} n={n} /> : <td colSpan={11} className={row.flowLine ? "border-b-2 border-black" : ""} />}
        <td colSpan={6} />
      </>
    );
  } else {
    body = (
      <>
        <td colSpan={18} className={row.ruleBelow ? "border-b-2 border-black" : ""} />
        <td colSpan={6} />
      </>
    );
  }
  const tall = row.h !== H15 && row.h !== H16;
  return (
    <tr className={row.h}>
      <th
        scope="row"
        className={`border-b align-bottom font-['Liberation_Sans'] text-[11px] leading-[14px] ${tall ? "pb-px" : ""} ${
          n === 5
            ? "border-r-2 border-r-[#107c41] border-b-[#dcdcdc] bg-[#efefef] font-bold text-[#107c41]"
            : "border-r border-r-[#b5b5b5] border-b-[#dcdcdc] bg-[#f8f8f8] font-normal text-[#5a5a5a]"
        }`}
      >
        {n}
      </th>
      {body}
    </tr>
  );
}

function Sheet() {
  return (
    <main className="relative mt-px min-h-0 flex-1 overflow-hidden border-t border-[#aeaeae] bg-white">
      <table className="w-[1388px] table-fixed border-separate border-spacing-0 font-[Lato] text-[11px] leading-[14px] text-black">
        <colgroup>
          <col className="w-[23px]" />
          {COLS.map(([name, w]) => (
            <col key={name} className={w} />
          ))}
        </colgroup>
        <thead>
          <tr className="h-[22px]">
            <td className="border-r border-b border-r-[#b5b5b5] border-b-[#aeaeae] bg-[#fafafa] pr-0.5">
              <span className="flex justify-end"><Icon w={14} h={14}><path d="M14 0V14H0Z" fill="#d4d4d4" stroke="none" /></Icon></span>
            </td>
            {COLS.map(([name]) => (
              <th
                key={name}
                scope="col"
                className={`border-r border-r-[#dcdcdc] bg-linear-to-b font-['Liberation_Sans'] text-[11px] font-normal ${
                  name === "I"
                    ? "border-b-2 border-b-[#107c41] from-[#efefef] to-[#ececec] text-[#107c41]"
                    : "border-b border-b-[#aeaeae] from-[#fdfdfd] to-[#f5f5f5] text-[#5a5a5a]"
                }`}
              >
                {name}
              </th>
            ))}
          </tr>
        </thead>
        <tbody>
          {ROWS.map((row, i) => (
            <SheetRow key={i} row={row} n={i + 1} />
          ))}
        </tbody>
      </table>
      <div className="absolute bottom-[3px] left-[25px] h-[7px] w-[895px] rounded-full bg-[#a1a1a1]" />
    </main>
  );
}

/* ---------- bottom bars ---------- */

const TABS: [string, string][] = [
  ["Optional Worksheets->", "w-[168px]"],
  ["Monthly", "w-[82px]"],
  ["Annual", "w-[79px]"],
  ["PV", "w-[79px]"],
  ["FV", "w-[79px]"],
  ["PV - Lump Sum", "w-[123px]"],
  ["FV - Lump Sum", "w-[122px]"],
];

function SheetTabs() {
  return (
    <nav className="flex h-[26px] shrink-0 border-t border-[#c6c6c6] bg-[#efefef] text-[12px] font-medium text-[#5f5f5f] [font-variant-ligatures:none]">
      <div className="flex h-5 w-[61px] items-center justify-between border-r border-[#c9c9c9] pt-[5px] pr-[15px] pl-[15px]">
        <button aria-label="Previous sheet"><Icon w={7} h={10}><path d="M7 0V10L0 5Z" fill="#555" stroke="none" /></Icon></button>
        <button aria-label="Next sheet"><Icon w={7} h={10}><path d="M0 0V10L7 5Z" fill="#b4b4b4" stroke="none" /></Icon></button>
      </div>
      <button className="flex h-5 w-[229px] items-end justify-center leading-[17px] whitespace-nowrap">
        <span className="bg-linear-to-r from-[#b4b4b4] to-[#5f5f5f] to-10% bg-clip-text text-transparent">RATIOS Same Fiscal Qtr 1 Yr Ago</span>
      </button>
      <button className="-mt-px h-[23px] w-20 rounded-b-xs border-x border-b border-[#b3b3b3] bg-white pt-[3px] font-bold text-[#0b8a4b] shadow-sm">NPV</button>
      {TABS.map(([name, w]) => (
        <button key={name} className={`flex h-5 items-end justify-center border-r border-[#c9c9c9] leading-[17px] whitespace-nowrap ${w}`}>
          {name}
        </button>
      ))}
      <button aria-label="Add sheet" className="flex h-5 w-[38px] items-center justify-center border-r border-[#c9c9c9] pt-[5px]">
        <Icon w={11} h={11}><path d="M5.500 0V11M0 5.500H11" stroke="#555" strokeWidth="2" /></Icon>
      </button>
    </nav>
  );
}

function StatusBar() {
  const [zoom, setZoom] = useState(100);
  return (
    <footer className="flex h-[23px] shrink-0 items-center justify-between border-t border-[#9c9c9c] bg-linear-to-b from-[#e3e3e3] to-[#d5d5d5] pr-[24px] pl-6 text-[12px] text-[#5c5c5c]">
      <span>Ready</span>
      <div className="flex items-center">
        <button aria-label="Normal view" className="flex h-[22px] w-[37px] items-center justify-center bg-[#a6a6a6]">
          <Icon w={13} h={13}><path d="M.6 .6H12.400V12.400H.6ZM4.500 .6V12.400M8.500 .6V12.400M.6 4.500H12.400M.6 8.500H12.400" stroke="#fff" /></Icon>
        </button>
        <button aria-label="Page layout view" className="flex w-[34px] justify-center">
          <Icon w={14} h={13}><path d="M.6 .6H13.400V12.400H.6ZM3.500 2.800H10.500V10.200H3.500ZM5 4.800H9M5 6.500H9M5 8.200H9" stroke="#666" strokeWidth="1.100" /></Icon>
        </button>
        <button aria-label="Page break view" className="flex w-[38px] justify-center">
          <Icon w={14} h={13}><path d="M.6 .6H13.400V12.400H.6ZM.6 7.500H8.500V.6M4.500 .6V7.500" stroke="#666" /></Icon>
        </button>
        <button aria-label="Zoom out" className="flex w-[22px] justify-center"><Icon w={8} h={8}><path d="M0 4H8" stroke="#555" strokeWidth="2" /></Icon></button>
        <input
          aria-label="Zoom"
          type="range"
          min={0}
          max={200}
          value={zoom}
          onChange={(e) => setZoom(Number(e.target.value))}
          className="h-1 w-[100px] appearance-none rounded-full bg-[#9a9a9a] [&::-webkit-slider-thumb]:h-4 [&::-webkit-slider-thumb]:w-4 [&::-webkit-slider-thumb]:appearance-none [&::-webkit-slider-thumb]:rounded-full [&::-webkit-slider-thumb]:bg-white [&::-webkit-slider-thumb]:shadow"
        />
        <button aria-label="Zoom in" className="flex w-[22px] justify-center"><Icon w={8} h={8}><path d="M0 4H8M4 0V8" stroke="#555" strokeWidth="2" /></Icon></button>
        <span className="w-[42px] text-right">{zoom}%</span>
      </div>
    </footer>
  );
}

export default function App() {
  return (
    <div className="flex h-screen flex-col overflow-hidden bg-[#f0f0f0] font-[Inter,sans-serif]">
      <TitleBar />
      <section className="shrink-0 border-b border-[#c6c6c6] bg-linear-to-b from-[#f6f6f6] to-[#ededed]">
        <MenuTabs />
        <Ribbon />
      </section>
      <FormulaBar />
      <Sheet />
      <SheetTabs />
      <StatusBar />
    </div>
  );
}
